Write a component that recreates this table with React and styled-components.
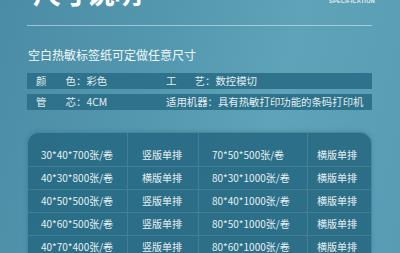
import React from "react"
import styled, { createGlobalStyle } from "styled-components"

const Global = createGlobalStyle`
  html, body { margin: 0; padding: 0; }
  body { font-family: "Noto Sans CJK SC", "Noto Sans", sans-serif; }
`

const Page = styled.div`
  width: 400px;
  height: 253px;
  overflow: hidden;
  box-sizing: border-box;
  padding: 0 28px 0 27px;
  background: linear-gradient(105deg, #4a8ca5 0%, #5397ae 35%, #5ea3b8 65%, #589cb3 100%);
  color: #eaf3f6;
`

const Header = styled.div`
  height: 25px;
  display: flex;
  justify-content: space-between;
  align-items: flex-start;
`

const Title = styled.h1`
  margin: -22px 0 0 6px;
  font-size: 28px;
  line-height: 28px;
  font-weight: 700;
  letter-spacing: -1px;
  color: #ffffff;
`

const Spec = styled.div`
  margin: -2px -3px 0 0;
  font-family: "Liberation Sans", sans-serif;
  font-size: 5.5px;
  line-height: 6px;
  font-weight: 700;
  color: #e6f1f5;
  letter-spacing: 0.3px;
`

const Divider = styled.div`
  height: 1px;
  background: rgba(220, 238, 244, 0.55);
`

const Subtitle = styled.p`
  margin: 21px 0 0 1px;
  font-size: 12px;
  line-height: 16px;
  color: #f2f8fa;
`

const InfoList = styled.div`
  margin-top: 10px;
  display: flex;
  flex-direction: column;
  gap: 5px;
`

const InfoRow = styled.div`
  height: 16px;
  display: grid;
  grid-template-columns: 130px 1fr;
  align-items: center;
  padding-left: 9px;
  background: #2f728b;
  font-size: 10.4px;
  line-height: 16px;
  color: #e2eef2;
`

const Field = styled.div`
  display: flex;
  white-space: nowrap;
`

const Label = styled.span`
  display: flex;
  justify-content: space-between;
  width: ${p => p.$w ? p.$w + "px" : "auto"};
`

const Table = styled.div`
  margin-top: 22px;
  background: rgba(40, 106, 131, 0.92);
  border: 1px solid rgba(160, 205, 220, 0.25);
  border-bottom: none;
  border-radius: 12px 12px 0 0;
  box-shadow: 0 -1px 4px rgba(20, 60, 80, 0.15);
  overflow: hidden;
`

const Cell = styled.div`
  height: 22px;
  line-height: 22px;
  padding-left: ${p => p.$pad}px;
  font-size: 10px;
  color: #e6f0f4;
  white-space: nowrap;
  border-left: ${p => p.$first ? "none" : "1px solid rgba(150, 195, 210, 0.22)"};
`

const Row = styled.div`
  display: grid;
  grid-template-columns: 99px 71px 109px 1fr;
  border-bottom: 1px solid rgba(150, 195, 210, 0.2);
  ${p => p.$top && `
    & > div { padding-top: 11px; }
  `}
`

const rows = [
  ["30*40*700张/卷", "竖版单排", "70*50*500张/卷", "横版单排"],
  ["40*30*800张/卷", "横版单排", "80*30*1000张/卷", "横版单排"],
  ["40*50*500张/卷", "竖版单排", "80*40*1000张/卷", "横版单排"],
  ["40*60*500张/卷", "竖版单排", "80*50*1000张/卷", "横版单排"],
  ["40*70*400张/卷", "竖版单排", "80*60*1000张/卷", "横版单排"],
]

const pads = [13, 14, 13, 9]

export default function App() {
  return (
    <Page>
      <Global />
      <Header>
        <Title>尺寸说明</Title>
        <Spec>SPECIFICATION</Spec>
      </Header>
      <Divider />
      <Subtitle>空白热敏标签纸可定做任意尺寸</Subtitle>
      <InfoList>
        <InfoRow>
          <Field><Label $w={40}><span>颜</span><span>色</span></Label>：彩色</Field>
          <Field><Label $w={39}><span>工</span><span>艺</span></Label>：数控模切</Field>
        </InfoRow>
        <InfoRow>
          <Field><Label $w={40}><span>管</span><span>芯</span></Label>：4CM</Field>
          <Field><Label>适用机器</Label>：具有热敏打印功能的条码打印机</Field>
        </InfoRow>
      </InfoList>
      <Table>
        {rows.map((r, i) => (
          <Row key={i} $top={i === 0}>
            {r.map((c, j) => (
              <Cell key={j} $pad={pads[j]} $first={j === 0}>{c}</Cell>
            ))}
          </Row>
        ))}
      </Table>
    </Page>
  )
}
